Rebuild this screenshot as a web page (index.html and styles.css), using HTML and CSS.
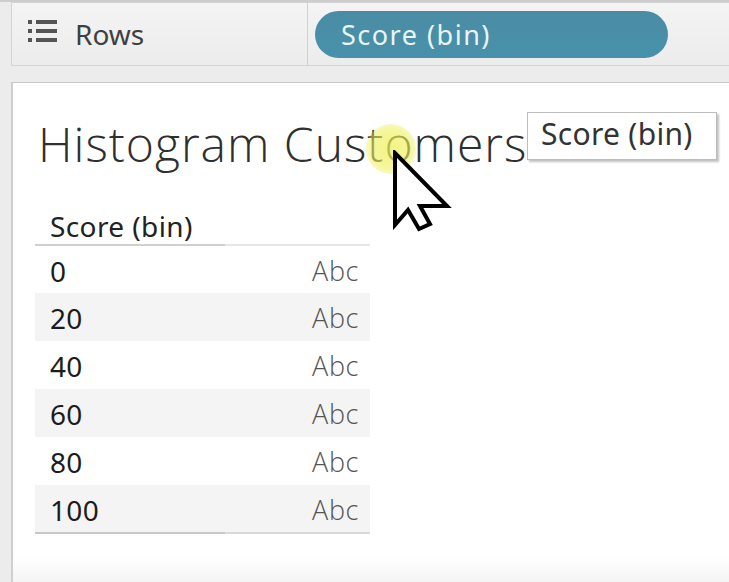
FILE: index.html
```html
<!DOCTYPE html>
<html>
<head>
<meta charset="utf-8">
<link rel="stylesheet" href="styles.css">
</head>
<body>
<div class="app">
  <div class="shelf">
    <div class="shelf-label">
      <svg class="rows-icon" width="30" height="24" viewBox="0 0 30 24">
        <rect x="0" y="1" width="4" height="4" fill="#555"/>
        <rect x="8" y="1" width="21" height="4" fill="#555"/>
        <rect x="0" y="10" width="4" height="4" fill="#555"/>
        <rect x="8" y="10" width="21" height="4" fill="#555"/>
        <rect x="0" y="19" width="4" height="4" fill="#555"/>
        <rect x="8" y="19" width="21" height="4" fill="#555"/>
      </svg>
      <span class="shelf-name">Rows</span>
    </div>
    <div class="shelf-drop">
      <span class="pill">Score (bin)</span>
    </div>
  </div>
  <div class="canvas">
    <h1 class="title">Histogram Customers</h1>
    <table class="grid">
      <thead>
        <tr><th class="c1">Score (bin)</th><th class="c2"></th></tr>
      </thead>
      <tbody>
        <tr><td class="num">0</td><td class="abc">Abc</td></tr>
        <tr class="alt"><td class="num">20</td><td class="abc">Abc</td></tr>
        <tr><td class="num">40</td><td class="abc">Abc</td></tr>
        <tr class="alt"><td class="num">60</td><td class="abc">Abc</td></tr>
        <tr><td class="num">80</td><td class="abc">Abc</td></tr>
        <tr class="alt last"><td class="num">100</td><td class="abc">Abc</td></tr>
      </tbody>
    </table>
    <div class="tooltip">Score (bin)</div>
    <div class="highlight"></div>
    <svg class="cursor" width="60" height="82" viewBox="-3 -3 60 82">
      <path d="M0 0 L0 72 L13 57 L24 76 L35 71 L25 53 L52 53 Z" fill="#fff" stroke="#000" stroke-width="4" stroke-linejoin="miter"/>
    </svg>
  </div>
</div>
</body>
</html>
```
FILE: styles.css
```css
html, body {
  margin: 0;
  padding: 0;
  height: 100%;
  overflow: hidden;
}
body {
  background: #ececec;
  font-family: "Noto Sans", "Open Sans", sans-serif;
}
.app {
  border-top: 2px solid #cdcdcd;
  height: 580px;
  display: flex;
  flex-direction: column;
}
.shelf {
  margin-left: 11px;
  height: 62px;
  border: 1px solid #d4d4d4;
  border-right: none;
  display: flex;
  background: linear-gradient(#f4f4f4, #ececec);
}
.shelf-label {
  width: 296px;
  border-right: 1px solid #d0d0d0;
  display: flex;
  align-items: center;
  padding-left: 16px;
  box-sizing: border-box;
  gap: 17px;
}
.rows-icon {
  margin-top: -6px;
}
.shelf-name {
  font-size: 28px;
  color: #3f3f3f;
  margin-top: -1px;
}
.shelf-drop {
  flex: 1;
  display: flex;
  align-items: center;
  padding-left: 7px;
}
.pill {
  width: 353px;
  height: 47px;
  box-sizing: border-box;
  border-radius: 24px;
  background: linear-gradient(#4a8ca4, #4891aa);
  color: #eaf4f7;
  font-size: 27px;
  letter-spacing: 1.5px;
  display: flex;
  align-items: center;
  padding-left: 26px;
  margin-top: 0;
}
.canvas {
  position: relative;
  flex: 1;
  margin-top: 16px;
  margin-left: 11px;
  background: linear-gradient(#ffffff 0, #ffffff 474px, #f4f4f4 100%);
  border-top: 1px solid #c9c9c9;
  border-left: 2px solid #cfcfcf;
  padding-left: 22px;
}
.title {
  margin: 33px 0 0 3px;
  font-family: "Open Sans", sans-serif;
  font-weight: 300;
  font-size: 48px;
  line-height: 56px;
  color: #2f2f2f;
  letter-spacing: 1px;
}
.grid {
  margin-top: 30px;
  width: 335px;
  border-collapse: collapse;
  font-size: 28px;
}
.grid th {
  text-align: left;
  font-weight: 400;
  color: #222;
  line-height: 30px;
  padding: 9px 0 3px 15px;
  letter-spacing: 0.4px;
  white-space: nowrap;
}
.grid .c1 {
  width: 175px;
  border-bottom: 2px solid #cfcfcf;
}
.grid .c2 {
  border-bottom: 2px solid #e6e6e6;
}
.grid tbody tr {
  height: 48px;
}
.grid td {
  padding: 2px 0 0;
  line-height: 36px;
}
.grid tr.last .num {
  border-bottom: 2px solid #c8c8c8;
}
.grid tr.last .abc {
  border-bottom: 2px solid #dadada;
}
.grid tr.alt td {
  background: #f4f4f4;
}
.num {
  padding-left: 15px !important;
  color: #1c1c1c;
  letter-spacing: 0.3px;
}
.abc {
  text-align: right;
  padding-right: 11px !important;
  color: #555;
  font-family: "Open Sans", sans-serif;
  font-weight: 300;
  font-size: 27px;
  letter-spacing: 0.6px;
}
.tooltip {
  position: absolute;
  left: 514px;
  top: 29px;
  width: 190px;
  height: 48px;
  box-sizing: border-box;
  background: #fff;
  border: 1px solid #bdbdbd;
  box-shadow: 2px 2px 2px rgba(0,0,0,0.25);
  font-size: 30px;
  color: #333;
  padding-left: 13px;
  line-height: 42px;
  white-space: nowrap;
  letter-spacing: 0.3px;
}
.highlight {
  position: absolute;
  left: 353px;
  top: 41px;
  width: 50px;
  height: 50px;
  border-radius: 50%;
  background: radial-gradient(circle, rgba(240,240,90,0.75) 0, rgba(240,240,90,0.6) 55%, rgba(240,240,90,0) 100%);
}
.cursor {
  position: absolute;
  left: 379px;
  top: 67px;
}
```
